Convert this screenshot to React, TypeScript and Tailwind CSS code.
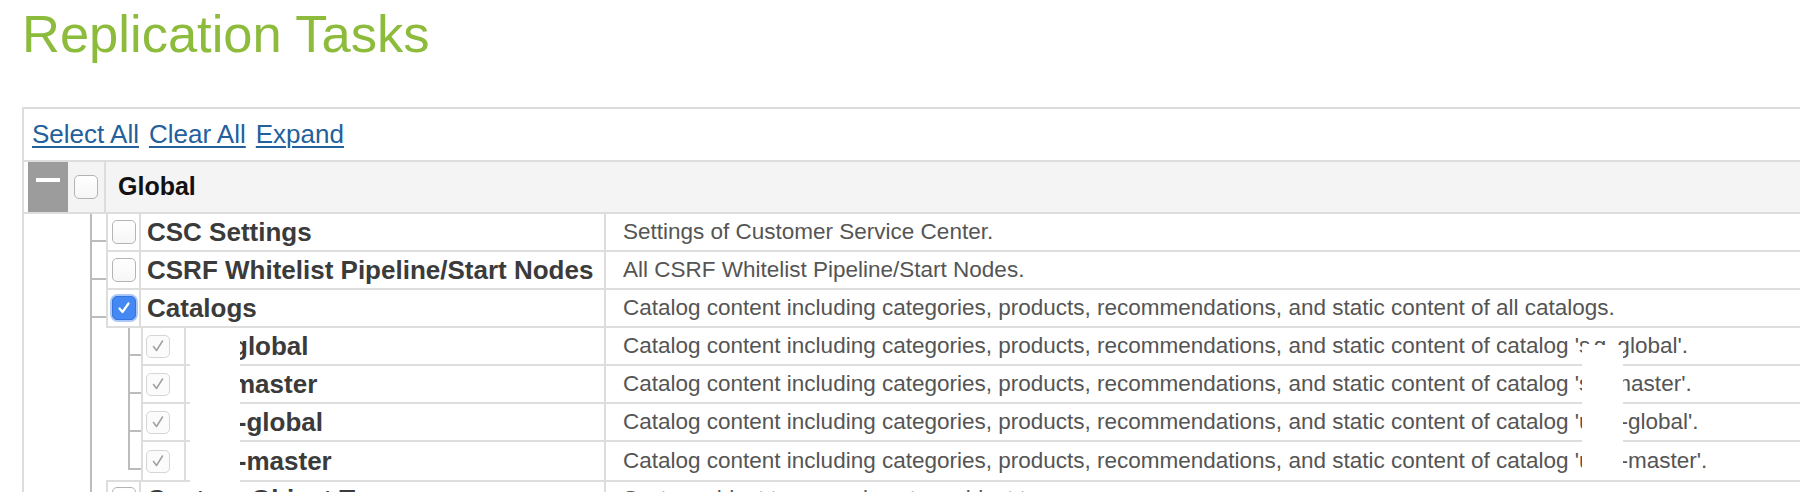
import React from "react";

type CbState = "off" | "on" | "dis";

function Checkbox({ state }: { state: CbState }) {
  if (state === "on") {
    return (
      <div className="w-[28px] h-[28px] rounded-[8px] bg-[#a9c8f8] flex items-center justify-center shrink-0 -ml-[2px]">
        <div className="w-[24px] h-[24px] rounded-[5px] bg-[#4388f3] border border-[#3574dc] flex items-center justify-center">
          <svg width="16" height="16" viewBox="0 0 16 16">
            <path d="M3.5 8.5 L6.5 12 L12.5 3.5" fill="none" stroke="#ffffff" strokeWidth="2.2" strokeLinecap="round" strokeLinejoin="round" />
          </svg>
        </div>
      </div>
    );
  }
  if (state === "dis") {
    return (
      <div className="w-[24px] h-[23px] rounded-[5px] bg-[#fbfbfb] border border-[#d6d6d6] flex items-center justify-center shrink-0">
        <svg width="16" height="16" viewBox="0 0 16 16">
          <path d="M3.5 8.5 L6.5 12.5 L12.5 3" fill="none" stroke="#a3a3a3" strokeWidth="1.6" strokeLinecap="round" strokeLinejoin="round" />
        </svg>
      </div>
    );
  }
  return (
    <div className="w-[24px] h-[24px] rounded-[5px] bg-gradient-to-b from-white to-[#f6f6f6] border border-[#b4b4b4] shrink-0" />
  );
}

function Row1({
  cb,
  name,
  desc,
  noBottom,
  topBorder,
}: {
  cb: CbState;
  name: string;
  desc: string;
  noBottom?: boolean;
  topBorder?: boolean;
}) {
  return (
    <div className="flex h-[38px]">
      <div className="w-[82px] shrink-0 flex">
        <div className="ml-[66px] w-[16px] border-l-2 border-[#bcbcbc]">
          <div className="h-[28px] border-b-2 border-[#bcbcbc]" />
        </div>
      </div>
      <div
        className={`flex flex-1 border-l-2 border-[#dddddd] ${noBottom ? "" : "border-b-2"} ${topBorder ? "border-t-2" : ""}`}
      >
        <div className="w-[33px] shrink-0 flex items-center pl-[4px] border-r-2 border-[#dddddd]">
          <Checkbox state={cb} />
        </div>
        <div className="w-[465px] shrink-0 flex items-center pl-[6px] border-r-2 border-[#dddddd] font-bold text-[26px] text-[#3b3b3b] whitespace-nowrap overflow-hidden">
          {name}
        </div>
        <div className="flex-1 flex items-center pl-[17px] text-[22.5px] text-[#555555] whitespace-nowrap">
          {desc}
        </div>
      </div>
    </div>
  );
}

function Row2({
  name,
  desc,
  last,
}: {
  name: React.ReactNode;
  desc: React.ReactNode;
  last?: boolean;
}) {
  return (
    <div className="flex h-[38px]">
      <div className="w-[117px] shrink-0 flex">
        <div className="ml-[66px] w-[38px] border-l-2 border-[#bcbcbc]" />
        {last ? (
          <div className="w-[13px]">
            <div className="h-[28px] border-l-2 border-b-2 border-[#bcbcbc]" />
          </div>
        ) : (
          <div className="w-[13px] border-l-2 border-[#bcbcbc]">
            <div className="h-[28px] border-b-2 border-[#bcbcbc]" />
          </div>
        )}
      </div>
      <div className={`flex flex-1 border-l-2 border-[#dddddd] ${last ? "" : "border-b-2"}`}>
        <div className="w-[43px] shrink-0 flex items-center pl-[3px] border-r-2 border-[#dddddd]">
          <Checkbox state="dis" />
        </div>
        <div className="w-[420px] shrink-0 flex items-center pl-[7px] border-r-2 border-[#dddddd] font-bold text-[26px] text-[#3b3b3b] whitespace-nowrap overflow-hidden">
          {name}
        </div>
        <div className="flex-1 flex items-center pl-[17px] text-[22.5px] text-[#555555] whitespace-nowrap">
          {desc}
        </div>
      </div>
    </div>
  );
}

const CAT = "Catalog content including categories, products, recommendations, and static content of catalog '";

export default function App() {
  return (
    <div className="relative w-[1800px] h-[492px] overflow-hidden bg-white font-['Liberation_Sans',Arial,sans-serif]">
      <h1 className="h-[107px] pl-[22px] pt-[8px] text-[52.5px] leading-none font-normal text-[#8dbb3c] whitespace-nowrap">
        Replication Tasks
      </h1>

      <div className="ml-[22px] w-[1800px] border-2 border-[#dddddd] pb-[40px]">
        <div className="h-[51px] flex items-center gap-[10px] pl-[8px] text-[26px] text-[#23609c]">
          <span className="underline decoration-[2px] underline-offset-[3px]">Select All</span>
          <span className="underline decoration-[2px] underline-offset-[3px]">Clear All</span>
          <span className="underline decoration-[2px] underline-offset-[3px]">Expand</span>
        </div>

        <div className="flex h-[54px] border-y-2 border-[#dddddd]">
          <div className="w-[4px] shrink-0 bg-white" />
          <div className="w-[40px] shrink-0 bg-[#9c9c9c] flex justify-center">
            <div className="mt-[16px] w-[24px] h-[4px] bg-white" />
          </div>
          <div className="flex-1 flex bg-[#f4f4f4]">
            <div className="w-[38px] shrink-0 flex items-center pl-[6px] border-r-2 border-[#dddddd]">
              <Checkbox state="off" />
            </div>
            <div className="flex items-center pl-[12px] text-[25px] font-bold text-[#111111]">Global</div>
          </div>
        </div>

        <Row1 cb="off" name="CSC Settings" desc="Settings of Customer Service Center." />
        <Row1 cb="off" name="CSRF Whitelist Pipeline/Start Nodes" desc="All CSRF Whitelist Pipeline/Start Nodes." />
        <Row1
          cb="on"
          name="Catalogs"
          desc="Catalog content including categories, products, recommendations, and static content of all catalogs."
        />
        <Row2
          name="sg-global"
          desc={
            <>
              {CAT}
              <span className="tracking-[3.5px]">sg</span>-global'.
            </>
          }
        />
        <Row2
          name="sg-master"
          desc={
            <>
              {CAT}
              <span className="tracking-[1px]">sg</span>-master'.
            </>
          }
        />
        <Row2
          name="usa-global"
          desc={
            <>
              {CAT}
              <span className="tracking-[1.7px]">usa</span>-global'.
            </>
          }
        />
        <Row2
          name="usa-master"
          desc={
            <>
              {CAT}
              <span className="tracking-[1.7px]">usa</span>-master'.
            </>
          }
          last
        />
        <Row1 cb="off" name="Custom Object Types" desc="System object types and custom object types." topBorder />
      </div>

      <div className="absolute left-[190px] top-[330px] w-[50px] h-[152px] bg-white" />
      <div className="absolute left-[1582px] top-[345px] w-[41px] h-[134px] bg-white" />
    </div>
  );
}
